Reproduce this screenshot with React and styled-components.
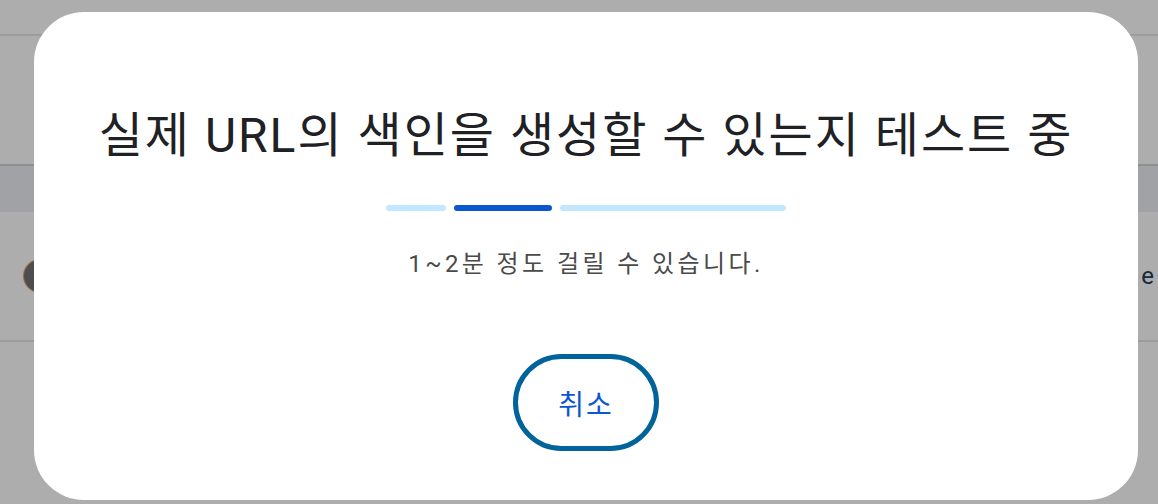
import React from 'react';
import styled, { createGlobalStyle } from 'styled-components';

const GlobalStyle = createGlobalStyle`
    html, body {
        margin: 0;
        padding: 0;
        width: 100%;
        height: 100%;
        overflow: hidden;
        background: #ffffff;
        font-family: Roboto, "Noto Sans CJK KR", sans-serif;
    }
`;

const Page = styled.div`
    position: relative;
    width: 1158px;
    height: 504px;
    display: flex;
    flex-direction: column;
    background: #ffffff;
`;

const TopBar = styled.div`
    height: 34px;
    border-bottom: 2px solid #e6e6e6;
`;

const Spacer = styled.div`
    height: ${(p) => p.h}px;
`;

const Band = styled.div`
    height: 46px;
    border-top: 2px solid #d2d5d9;
    background: #eceff3;
`;

const Row = styled.div`
    height: 130px;
    display: flex;
    align-items: center;
    justify-content: space-between;
    padding: 0 4px 0 24px;
    border-bottom: 2px solid #e6e6e6;
    box-sizing: border-box;
`;

const Avatar = styled.div`
    width: 32px;
    height: 32px;
    border-radius: 50%;
    background: #727272;
    box-shadow: 0 0 0 1px #d9a36b;
`;

const RowText = styled.span`
    font-size: 24px;
    color: #1f3b5a;
`;

const Scrim = styled.div`
    position: absolute;
    inset: 0;
    background: rgba(0, 0, 0, 0.32);
    display: flex;
    padding: 12px 20px 4px 34px;
`;

const Dialog = styled.div`
    flex: 1;
    background: #ffffff;
    border-radius: 50px;
    display: flex;
    flex-direction: column;
    align-items: center;
    padding-top: 96px;
`;

const Title = styled.h1`
    margin: 0;
    font-size: 48px;
    line-height: 56px;
    font-weight: 400;
    color: #202124;
    letter-spacing: 2px;
`;

const Progress = styled.div`
    display: flex;
    gap: 8px;
    margin-top: 41px;
`;

const Segment = styled.div`
    width: ${(p) => p.w}px;
    height: 6px;
    border-radius: 3px;
    background: ${(p) => (p.active ? '#0b57d0' : '#c2e7ff')};
`;

const Note = styled.p`
    margin: 38px 0 0;
    font-size: 24px;
    line-height: 30px;
    color: #4a4a4a;
    letter-spacing: 3.4px;
`;

const CancelButton = styled.button`
    margin-top: 75px;
    width: 146px;
    height: 97px;
    border: 5px solid #00639b;
    border-radius: 999px;
    background: #ffffff;
    color: #0b57d0;
    font-family: Roboto, "Noto Sans CJK KR", sans-serif;
    font-size: 28px;
    letter-spacing: 2px;
    cursor: pointer;
`;

export default function App() {
    return (
        <>
            <GlobalStyle />
            <Page>
                <TopBar />
                <Spacer h={128} />
                <Band />
                <Row>
                    <Avatar />
                    <RowText>e</RowText>
                </Row>
                <Scrim>
                    <Dialog>
                        <Title>실제 URL의 색인을 생성할 수 있는지 테스트 중</Title>
                        <Progress>
                            <Segment w={60} />
                            <Segment w={98} active />
                            <Segment w={226} />
                        </Progress>
                        <Note>1~2분 정도 걸릴 수 있습니다.</Note>
                        <CancelButton>취소</CancelButton>
                    </Dialog>
                </Scrim>
            </Page>
        </>
    );
}
